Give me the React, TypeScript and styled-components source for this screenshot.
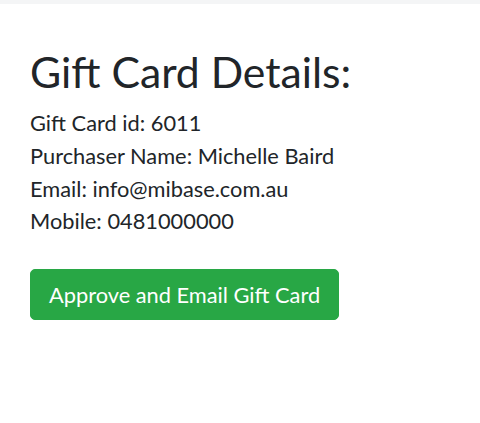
import React from "react";
import styled, { createGlobalStyle } from "styled-components";

const GlobalStyle = createGlobalStyle`
  body {
    margin: 0;
    background: #fff;
    font-family: "Segoe UI", Lato, "Liberation Sans", sans-serif;
    color: #212529;
  }
`;

const details = [
  { label: "Gift Card id", value: "6011" },
  { label: "Purchaser Name", value: "Michelle Baird" },
  { label: "Email", value: "info@mibase.com.au" },
  { label: "Mobile", value: "0481000000" },
];

function App() {
  return (
    <>
      <GlobalStyle />
      <TopBar />
      <Container>
        <Title>Gift Card Details:</Title>
        <DetailList>
          {details.map((d) => (
            <Detail key={d.label}>
              {d.label}: {d.value}
            </Detail>
          ))}
        </DetailList>
        <ApproveButton type="button">Approve and Email Gift Card</ApproveButton>
      </Container>
    </>
  );
}

const TopBar = styled.div`
  height: 4px;
  background: #f4f5f6;
`;
const Container = styled.div`
  padding: 42px 30px;
`;
const Title = styled.h1`
  margin: 0 0 10px;
  font-size: 42.7px;
  font-weight: 400;
  line-height: 1.2;
`;
const DetailList = styled.div`
  margin-bottom: 31px;
`;
const Detail = styled.div`
  font-size: 21.8px;
  line-height: 32.7px;
`;
const ApproveButton = styled.button`
  display: inline-block;
  padding: 8px 18px;
  border: 1px solid #28a745;
  border-radius: 5px;
  background: #28a745;
  color: #fff;
  font-family: inherit;
  font-size: 21.8px;
  line-height: 33px;
  cursor: pointer;
`;

export default App;
